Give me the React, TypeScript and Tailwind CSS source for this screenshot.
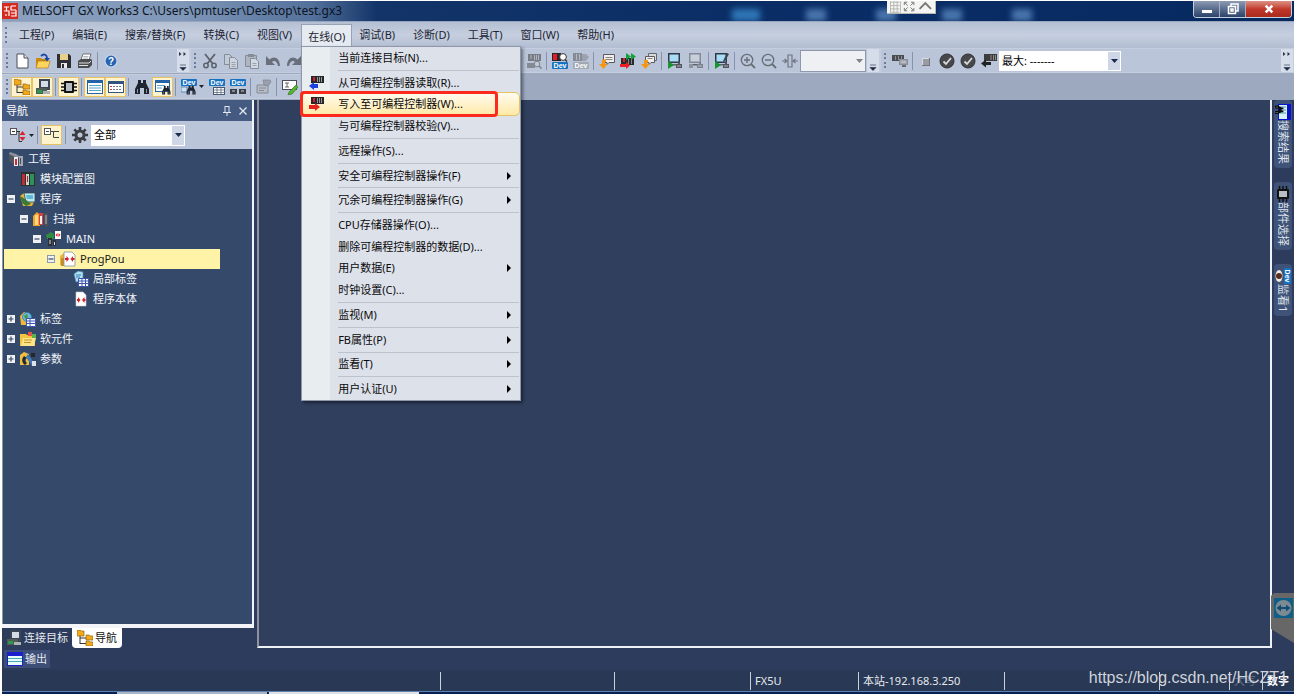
import React from 'react';
import type { ReactNode } from 'react';

const FONT = "font-['Noto_Sans','Noto_Sans_CJK_SC',sans-serif]";

function Svg({ children, size = 'size-4' }: { children: ReactNode; size?: string }) {
  return (
    <svg viewBox="0 0 16 16" className={`${size} shrink-0`} aria-hidden="true">
      {children}
    </svg>
  );
}

/* ---------- small drawing parts ---------- */

function Rack({ off = false, y = 0 }: { off?: boolean; y?: number }) {
  return (
    <g transform={`translate(0 ${y})`}>
      <rect x="2" y="1" width="13" height="7" fill={off ? '#777c85' : '#26262a'} />
      <rect x="4" y="2" width="2" height="4" fill={off ? '#9297a0' : '#d6202c'} />
      <path d="M8.5 2v5M10.5 2v5M12.5 2v5" stroke={off ? '#aeb4bf' : '#9a9a96'} />
    </g>
  );
}

function DevTag({ y = 0, off = false }: { y?: number; off?: boolean }) {
  return (
    <g transform={`translate(0 ${y})`}>
      <rect x="0" y="0" width="16" height="7" rx="1" fill={off ? '#a2a8b3' : '#1673c4'} />
      <text x="8" y="6" fontSize="7" fontWeight="700" fill="#fff" textAnchor="middle" fontFamily="Liberation Sans">
        Dev
      </text>
    </g>
  );
}

function Binoc({ t = '', c = '#1d2430' }: { t?: string; c?: string }) {
  return (
    <g transform={t} fill={c}>
      <path d="M4 1h3v3h2V1h3v3l3 6v5h-5V9H6v6H1v-5l3-6z" />
      <path d="M3.500 10v4M12.500 10v4" stroke="#8d95a5" />
    </g>
  );
}

function MonitorShape({ off = false }: { off?: boolean }) {
  return (
    <g>
      <rect x="1" y="0" width="12" height="10" fill={off ? '#858b96' : '#2f3a48'} />
      <rect x="2.500" y="1.500" width="9" height="7" fill={off ? '#c9cfda' : '#a9dcf5'} />
      <path d="M4 11h5v1.500H4z" fill="#5d646f" />
      <path d="M9 11h2v-2h2v2h2v4h-6z" fill={off ? '#7c828c' : '#50545c'} />
      <path d="M11 12v2M13 12v2" stroke="#c9ccd2" strokeWidth=".8" />
    </g>
  );
}

/* ---------- toolbar icons ---------- */

const NewIcon = () => (
  <Svg>
    <path d="M3 1h7l4 4v10H3z" fill="#fff" stroke="#4b4f58" />
    <path d="M10 1v4h4" fill="#dfe3ea" stroke="#4b4f58" />
  </Svg>
);
const OpenIcon = () => (
  <Svg>
    <path d="M1 5h5l1 1h6v9H1z" fill="#c98a10" />
    <path d="M3 8h12l-2 7H1z" fill="#ffd45c" stroke="#a8710d" strokeWidth=".6" />
    <path d="M6 3c3-3 6-1 6 2" fill="none" stroke="#1747a5" strokeWidth="1.800" />
    <path d="M9.500 5h5.500l-3 3.500z" fill="#1747a5" />
  </Svg>
);
const SaveIcon = () => (
  <Svg>
    <path d="M1 1h12l2 2v12H1z" fill="#2e2f33" />
    <rect x="4" y="1" width="8" height="6" fill="#e7cf8c" />
    <rect x="5" y="10" width="6" height="5" fill="#e9e9ec" />
    <rect x="6" y="11" width="2" height="4" fill="#2e2f33" />
  </Svg>
);
const PrintIcon = () => (
  <Svg>
    <path d="M6 1h8l-2 6H4z" fill="#fff" stroke="#555" strokeWidth=".8" />
    <path d="M6.500 3.500h5M6 5h5" stroke="#888" strokeWidth=".6" />
    <path d="M1 8l3-2h10l1 1v5l-3 3H1z" fill="#4c4d51" />
    <path d="M2 10h10l2-2M2 12.500h9" stroke="#dedede" fill="none" />
  </Svg>
);
const HelpIcon = () => (
  <Svg>
    <circle cx="8" cy="8" r="6" fill="#2763b3" stroke="#c4d5ec" strokeWidth="1.200" />
    <text x="8" y="11.500" fontSize="10" fontWeight="700" fill="#fff" textAnchor="middle" fontFamily="Liberation Sans">
      ?
    </text>
  </Svg>
);
const CutIcon = () => (
  <Svg>
    <path d="M3 1l8 10M13 1L5 11" stroke="#5b616b" strokeWidth="1.800" fill="none" />
    <circle cx="4" cy="12.500" r="2.200" fill="none" stroke="#5b616b" strokeWidth="1.500" />
    <circle cx="12" cy="12.500" r="2.200" fill="none" stroke="#5b616b" strokeWidth="1.500" />
  </Svg>
);
const CopyIcon = () => (
  <Svg>
    <path d="M1.500 1.500h5l3 3v7h-8z" fill="#c3cad7" stroke="#878d98" />
    <path d="M6.500 4.500h5l3 3v8h-8z" fill="#cdd4e0" stroke="#878d98" />
    <path d="M8.500 9.500h4M8.500 11.500h4M8.500 13.500h4" stroke="#9ba1ab" />
  </Svg>
);
const PasteIcon = () => (
  <Svg>
    <path d="M1.500 2.500h11v11h-11z" fill="#aeb5c1" stroke="#878d98" />
    <path d="M4 1h6v3H4z" fill="#878d98" />
    <path d="M6.500 5.500h5l3 3v7h-8z" fill="#d2d8e3" stroke="#878d98" />
    <path d="M8.500 10.500h4M8.500 12.500h4" stroke="#9ba1ab" />
  </Svg>
);
const UndoIcon = () => (
  <Svg>
    <path d="M1 3v9h9L7 9c2-2 5-1 6 4h2C15 5 9 2 4.500 6.500z" fill="#6a707b" />
  </Svg>
);
const RedoIcon = () => (
  <Svg>
    <path d="M15 3v9H6l3-3C7 7 4 8 3 13H1C1 5 7 2 11.500 6.500z" fill="#6a707b" />
  </Svg>
);
const RackSearchOff = () => (
  <Svg>
    <Rack off />
    <path d="M1 10h8v5H1z" fill="#858b95" />
    <circle cx="11" cy="11" r="2.800" fill="#c5ccd8" stroke="#7b818b" />
    <path d="M13 13l2.500 2.500" stroke="#7b818b" strokeWidth="1.500" />
  </Svg>
);
const RackDev = () => (
  <Svg>
    <rect x="0" y="0" width="9" height="8" fill="#26262a" />
    <rect x="1" y="1" width="4" height="6" fill="#e01d2c" />
    <circle cx="11" cy="4" r="3.400" fill="#fff" stroke="#333" />
    <path d="M13 6.500l2 2" stroke="#333" strokeWidth="1.500" />
    <DevTag y={9} />
  </Svg>
);
const RackDevOff = () => (
  <Svg>
    <rect x="0" y="0" width="9" height="8" fill="#858b95" />
    <path d="M3.500 1v6M6.500 1v6" stroke="#b5bbc5" />
    <path d="M9 1h4l3 3-3 4H9z" fill="#9ca2ad" />
    <DevTag y={9} off />
  </Svg>
);
const NoteOut = () => (
  <Svg>
    <path d="M4.500 1.500h11v8H10l-2 2v-2H4.500z" fill="#f1eeee" stroke="#5b5b5f" />
    <path d="M6.500 4.500h7M6.500 6.500h7" stroke="#8d8080" />
    <path d="M7 6.500H3V11H0l4.500 5 4-5H6V9h1z" fill="#f7960f" />
  </Svg>
);
const NoteOut2 = () => (
  <Svg>
    <path d="M7.500.5h8v7h-8z" fill="#d9d9dd" stroke="#66676d" />
    <path d="M4.500 3.500h9v6H10l-2 2v-2H4.500z" fill="#f1eeee" stroke="#5b5b5f" />
    <path d="M6.500 5.500h5" stroke="#8d8080" />
    <path d="M7 7H3v4H0l4.500 5 4-5H6V9.500h1z" fill="#f7960f" />
  </Svg>
);
const RackGo = () => (
  <Svg>
    <path d="M1 5h13v7H1z" fill="#2a2a2d" />
    <path d="M3 5h2v4H3z" fill="#e01d2c" />
    <path d="M8.500 6v5M11.500 6v5" stroke="#8b8b8b" />
    <path d="M6 0l5 3.500L6 7zM11 0l5 3.500L11 7z" fill="#15a23a" />
    <path d="M0 11h6V9l4 3.500L6 16v-2H0z" fill="#ec1f24" />
  </Svg>
);
const MonitorRun = () => (
  <Svg>
    <MonitorShape />
    <path d="M1 8l6 4-6 4z" fill="#17942c" />
  </Svg>
);
const MonitorOff = () => (
  <Svg>
    <MonitorShape off />
    <rect x="1" y="11" width="4" height="4" fill="#8d939d" />
  </Svg>
);
const MonitorEdit = () => (
  <Svg>
    <MonitorShape />
    <path d="M1 8l6 4-6 4z" fill="#17942c" />
    <path d="M15 1l-4 7-2 1 .5-2L13 0z" fill="#3b4452" />
  </Svg>
);
const ZoomPlus = ({ minus = false }: { minus?: boolean }) => (
  <Svg>
    <circle cx="7" cy="7" r="5.700" fill="none" stroke="#676d77" strokeWidth="1.300" />
    <path d="M11 11l4 4" stroke="#676d77" strokeWidth="1.800" />
    <path d={minus ? 'M4 7h6' : 'M4 7h6M7 4v6'} stroke="#676d77" strokeWidth="1.400" />
  </Svg>
);
const FitIcon = () => (
  <Svg>
    <path d="M6 2h4v12H6z" fill="none" stroke="#6f7580" strokeWidth="1.200" />
    <path d="M0 8h5M11 8h5M2.500 6L5 8l-2.500 2M13.500 6L11 8l2.500 2" fill="none" stroke="#6f7580" strokeWidth="1.200" />
  </Svg>
);
const RackMonitorIcon = () => (
  <Svg>
    <path d="M0 2h12v6H0z" fill="#4a4c52" />
    <path d="M3.500 3v4M6.500 3v4M9.500 3v4" stroke="#8c8f96" />
    <path d="M7 6h9v6H7z" fill="#8a8e96" />
    <path d="M8.500 7.500h6v3h-6z" fill="#b6bac2" />
    <path d="M10 12h4v2h-4z" fill="#656972" />
  </Svg>
);
const StopIcon = () => (
  <Svg>
    <rect x="4" y="5" width="8" height="8" fill="#73767d" />
    <rect x="4" y="5" width="7" height="7" fill="#d8dae0" />
    <rect x="5" y="6" width="6" height="6" fill="#999ca4" />
  </Svg>
);
const CheckIcon = () => (
  <Svg>
    <circle cx="8" cy="8" r="7" fill="#47484b" stroke="#303134" />
    <path d="M4.500 8.500l2.500 2.500 5-6" fill="none" stroke="#d9dadd" strokeWidth="1.800" />
  </Svg>
);
const RackBack = () => (
  <Svg>
    <path d="M3 1h13v7H3z" fill="#3b3c3f" />
    <path d="M10 2v5M12.500 2v5M14.500 2v5" stroke="#8d8d84" />
    <path d="M10 9H5V6.500L0 10.500l5 4V12h5z" fill="#222325" />
  </Svg>
);

const TreeIcon = () => (
  <Svg>
    <path d="M3 5v9M3 8h6M3 13.500h6" stroke="#333" fill="none" />
    <path d="M0 0h3l1 1h3v5H0zM9 5h3l1 1h3v4H9zM9 11h3l1 1h3v4H9z" fill="#f2a91c" stroke="#94630b" strokeWidth=".7" />
  </Svg>
);
const ConnectIcon = () => (
  <Svg>
    <path d="M4 0h11v11H4z" fill="#3d4654" />
    <path d="M6 2h7v6H6z" fill="#d4dce5" />
    <path d="M1 9h11v6H1z" fill="#4f5d57" />
    <path d="M2 11h5v3H2z" fill="#2d9650" />
    <path d="M8 12h7v3H8z" fill="#aab4b4" />
  </Svg>
);
const ChipIcon = ({ size }: { size?: string }) => (
  <Svg size={size}>
    <path d="M0 4.500h16M0 8h16M0 11.500h16" stroke="#111" strokeWidth="1.500" />
    <rect x="3" y="2" width="10" height="12" rx="1" fill="#111" />
    <rect x="5" y="4" width="6" height="8" fill="#b9bdc4" />
  </Svg>
);
const WindowIcon = () => (
  <Svg>
    <rect x="0" y="1" width="16" height="14" fill="#2463a8" />
    <rect x="1" y="4" width="14" height="10" fill="#fff" />
    <path d="M2 6.500h12M2 9h12M2 11.500h12" stroke="#57a9cb" />
  </Svg>
);
const WindowListIcon = () => (
  <Svg>
    <rect x="0" y="2" width="16" height="12" fill="#31557f" />
    <rect x="1" y="5" width="14" height="8" fill="#fff" />
    <path d="M2 7.500h2M2 10.500h2" stroke="#c23737" />
    <path d="M5 7.500h9M5 10.500h9" stroke="#76818e" strokeDasharray="2 1" />
  </Svg>
);
const WindowFind = () => (
  <Svg>
    <rect x="0" y="1" width="15" height="12" fill="#2463a8" />
    <rect x="1" y="4" width="13" height="8" fill="#fff" />
    <path d="M2 6.500h8M2 9h5" stroke="#57a9cb" />
    <Binoc t="translate(6.500 6.500) scale(.6)" />
  </Svg>
);
const BinocIcon = () => (
  <Svg>
    <Binoc />
  </Svg>
);
const DevFind = () => (
  <Svg>
    <DevTag />
    <path d="M0 8h6v5H0z" fill="#cfe0ef" stroke="#2d6ba6" strokeWidth=".7" />
    <Binoc t="translate(5 6) scale(.64)" />
  </Svg>
);
const DevTable = () => (
  <Svg>
    <DevTag />
    <rect x="4.500" y="8.500" width="11" height="7" fill="#fff" stroke="#4a5972" />
    <path d="M4 11h12M4 13.500h12M8 8v8M12 8v8" stroke="#4a5972" strokeWidth=".7" />
  </Svg>
);
const DevNet = () => (
  <Svg>
    <DevTag />
    <path d="M0 10h7v5H0zM9 10h7v5H9z" fill="#3a3f47" />
    <path d="M2 12h3M11 12h3M4 8.500h8" stroke="#cbd1da" />
  </Svg>
);
const PropsOff = () => (
  <Svg>
    <path d="M1 6h11v8H1z" fill="#b6bcc7" stroke="#858b96" />
    <path d="M3 9h7M3 11.500h5" stroke="#858b96" />
    <path d="M7 1h7l1 2-3 4-4-1z" fill="#9aa0ab" stroke="#7e848f" strokeWidth=".7" />
  </Svg>
);
const EditIcon = () => (
  <Svg>
    <rect x=".5" y="1.500" width="14" height="9" fill="#fff" stroke="#4b5058" />
    <path d="M3 4h4M5 4v4M3 8h4" stroke="#444" strokeWidth=".8" />
    <path d="M14 6l2 2-6 7-4 1 1-3z" fill="#55b52f" stroke="#2b6c18" strokeWidth=".6" />
  </Svg>
);
const ReadIcon = () => (
  <Svg>
    <Rack />
    <path d="M9 9H5V7l-5 4 5 4v-2h4z" fill="#1c3fe0" />
  </Svg>
);
const WriteIcon = () => (
  <Svg>
    <Rack />
    <path d="M0 9h6V7l5 4-5 4v-2H0z" fill="#e3231c" />
  </Svg>
);

/* ---------- navigation icons ---------- */

const CollapseIcon = () => (
  <Svg>
    <rect x=".5" y="1.500" width="6" height="6" fill="#fff" stroke="#555" />
    <path d="M2 4.500h3M7 4.500h3M9 4.500v10M9 14.500h3" stroke="#333" fill="none" />
    <path d="M12.500 4l3 4h-6zM12.500 14l3-4h-6z" fill="#d8242a" />
  </Svg>
);
const ExpandIcon = () => (
  <Svg>
    <rect x=".5" y="1.500" width="6" height="6" fill="#fff" stroke="#555" />
    <path d="M2 4.500h3M7 4.500h2.500v6H15M9.500 4.500H15" stroke="#444" fill="none" />
  </Svg>
);
const GearIcon = () => (
  <Svg>
    <circle cx="8" cy="8" r="4" fill="none" stroke="#3b3d42" strokeWidth="3" />
    <path d="M8 0v3M8 13v3M0 8h3M13 8h3M2.300 2.300l2.200 2.200M11.500 11.500l2.200 2.200M13.700 2.300l-2.200 2.200M4.500 11.500l-2.200 2.200" stroke="#3b3d42" strokeWidth="2.600" />
  </Svg>
);
const ProjectIcon = () => (
  <Svg>
    <path d="M1 2l6 3v9l-6-4z" fill="#50545c" />
    <path d="M2 1l6 2 5 3-4 1-8-4z" fill="#8b9099" />
    <path d="M6 6h4v9H6z" fill="#e9eef3" />
    <path d="M7 8h2v6H7z" fill="#d52b33" />
    <path d="M11 5h4v10h-4z" fill="#a3a9b1" />
    <path d="M12.500 7v6" stroke="#454a52" />
  </Svg>
);
const ModuleIcon = () => (
  <Svg>
    <path d="M1 1h14v14H1z" fill="#26332f" />
    <path d="M2 3h3v11H2z" fill="#c32b35" />
    <path d="M6 3h3v11H6z" fill="#c9d4cf" />
    <path d="M7.500 5v6" stroke="#b7222c" />
    <path d="M10 3h4v11h-4z" fill="#2f9157" />
  </Svg>
);
const ProgramIcon = () => (
  <Svg>
    <path d="M0 5l4-3h11v7l-3 6H3z" fill="#e0b43a" />
    <path d="M4 2h11v9H6z" fill="#bfe8f2" stroke="#2e4d5a" strokeWidth=".8" />
    <path d="M6 4h7v4H7z" fill="#5fb9d4" />
    <path d="M0 5l5 3 6 5-5 2-4-3z" fill="#3d7a36" />
  </Svg>
);
const ScanIcon = () => (
  <Svg>
    <path d="M0 5l4-4 3 3v11H0z" fill="#f0a72e" />
    <path d="M2 4h3v10H2z" fill="#ffd77a" />
    <path d="M6 2h4v12H6z" fill="#d64040" />
    <path d="M7 5h2v8H7z" fill="#f5f0ee" />
    <path d="M11 2h4v13h-4z" fill="#4c4f56" />
    <path d="M13 4v9" stroke="#b4b8c0" />
  </Svg>
);
const MainIcon = () => (
  <Svg>
    <path d="M0 4l5-3 3 2v5H1z" fill="#2f8a45" />
    <path d="M2 7h4v8H2zM7 9h3v6H7z" fill="#2b2f36" />
    <path d="M4 9v4M8.500 11v3" stroke="#d7dbe0" />
    <path d="M9 0h6v8H9z" fill="#fff" />
    <path d="M9.500 4l2-2v4zM14.500 4l-2-2v4z" fill="#d4222a" />
  </Svg>
);
const PouIcon = () => (
  <Svg>
    <path d="M0 5l4-3v12H0z" fill="#eeb53c" />
    <path d="M1 7h3v8H1z" fill="#c98f1e" />
    <path d="M4 1h8l3 3v11H4z" fill="#fff" stroke="#8392aa" strokeWidth=".8" />
    <path d="M5 7h1.500V5L9 8l-2.500 3V9H5zM14.500 7H13V5l-2.500 3 2.500 3V9h1.500z" fill="#d4222a" />
  </Svg>
);
const LocalLabelIcon = () => (
  <Svg>
    <path d="M1 3l4-3 5 1v9l-7 1z" fill="#aee0f4" stroke="#4a8cb6" strokeWidth=".7" />
    <path d="M3 4h5M3 6h4" stroke="#3d7fb0" />
    <path d="M5.500 7.500h10v8h-10z" fill="#fff" stroke="#3a54b4" />
    <path d="M5 10h11M5 12.500h11M9 7v9M12.500 7v9" stroke="#3a54b4" />
  </Svg>
);
const BodyIcon = () => (
  <Svg>
    <path d="M3 1h7l3 3v11H3z" fill="#fff" stroke="#c3cad6" strokeWidth=".6" />
    <path d="M4 8h1V6l2.500 3L5 12v-2H4zM12.500 8h-1V6L9 9l2.500 3v-2h1z" fill="#d4222a" />
  </Svg>
);
const LabelIcon = () => (
  <Svg>
    <path d="M0 5l4-4 7 3v10H1z" fill="#efb73d" />
    <circle cx="7" cy="6" r="4.500" fill="#68b7dd" stroke="#2e7ba5" strokeWidth=".7" />
    <path d="M4 5l3-2 1 3-2 3z" fill="#3f9e4d" />
    <path d="M6.500 7.500h9v8h-9z" fill="#fff" stroke="#3a54b4" />
    <path d="M6 10h10M6 12.500h10M10 7v9" stroke="#3a54b4" />
  </Svg>
);
const DeviceIcon = () => (
  <Svg>
    <path d="M0 3h6l1 1h8v11H0z" fill="#f3c53f" />
    <path d="M3 7h13l-2 8H1z" fill="#ffe58a" />
    <path d="M8 1h4v4H8z" fill="#e2574c" />
    <path d="M12 3h4v4h-4z" fill="#59b34f" />
    <path d="M4 9h8M4 11.500h7" stroke="#c39424" />
  </Svg>
);
const ParamIcon = () => (
  <Svg>
    <path d="M0 4l4-3 5 2v11H0z" fill="#f0bd40" />
    <path d="M4 5c-3 3-2 7 1 9l2-2c-2-1-2-4 0-5z" fill="#1f2a38" />
    <path d="M8 3l7 10-3 2-6-9z" fill="#3f78b6" />
    <path d="M11 2h4v4h-4z" fill="#22262e" />
    <path d="M12 10h4v5h-4z" fill="#dbe2ea" />
  </Svg>
);
const OutputIcon = () => (
  <Svg>
    <rect x="0" y="1" width="16" height="14" fill="#1a1fd0" />
    <rect x="1" y="5" width="14" height="9" fill="#e8fbff" />
    <path d="M1 7.500h14M1 10.500h14" stroke="#45aeb4" />
  </Svg>
);
const SearchResultIcon = () => (
  <Svg>
    <rect x="0" y="0" width="16" height="13" fill="#0a12cf" />
    <rect x="1" y="4" width="14" height="8" fill="#d3f3f5" />
    <path d="M3 5v6M6 5v6M9 5v6" stroke="#58a0a8" />
    <Binoc t="translate(1 7) scale(.6)" c="#090b10" />
  </Svg>
);
const WatchIcon = () => (
  <Svg>
    <DevTag />
    <ellipse cx="8" cy="12" rx="6" ry="3.500" fill="#f4e9de" />
    <circle cx="8" cy="12" r="3" fill="#572f1c" />
  </Svg>
);

/* ---------- controls ---------- */

function Tool({ label, icon, active = false }: { label: string; icon: ReactNode; active?: boolean }) {
  return (
    <button
      type="button"
      aria-label={label}
      className={`flex h-5 w-[21px] shrink-0 items-center justify-center border ${
        active ? 'border-[#e5c365] bg-[#fff3cd]' : 'border-transparent'
      }`}
    >
      {icon}
    </button>
  );
}

const Sep = () => <span className="mx-[2px] h-[18px] w-px shrink-0 bg-[#8693ad]" />;
const Grip = () => (
  <span className="flex h-4 w-2 shrink-0 flex-col items-center justify-between">
    <i className="size-[2px] bg-[#6c7a95]" />
    <i className="size-[2px] bg-[#6c7a95]" />
    <i className="size-[2px] bg-[#6c7a95]" />
    <i className="size-[2px] bg-[#6c7a95]" />
  </span>
);

function Overflow({ more = false }: { more?: boolean }) {
  return (
    <button type="button" aria-label="工具栏选项" className="ml-auto flex h-full w-3 shrink-0 items-center justify-center bg-[#d5dcea]">
      <svg viewBox="0 0 10 22" className="h-[22px] w-[10px]" aria-hidden="true">
        {more && <path d="M1 2l2.500 2L1 6zM5.500 2L8 4 5.500 6z" fill="#2b3344" />}
        <path d="M2 15h6M2 17.500h6L5 20.500z" fill="#1f2a44" stroke="#1f2a44" strokeWidth=".6" />
      </svg>
    </button>
  );
}

function Dropdown({ label, value, box, off = false }: { label: string; value: string; box: string; off?: boolean }) {
  return (
    <span className={`relative flex shrink-0 ${box}`}>
      <select
        aria-label={label}
        className={`h-full w-full appearance-none border px-[2px] text-[11px] leading-4 text-black ${
          off ? 'border-[#8f99ab] bg-[#eef0f4]' : 'border-white bg-white'
        }`}
      >
        <option>{value}</option>
      </select>
      <span
        className={`pointer-events-none absolute inset-y-px right-px flex w-3 items-center justify-center ${
          off ? 'bg-[#eef0f4]' : 'bg-[#cfd7e6]'
        }`}
      >
        <svg viewBox="0 0 7 4" className="h-1 w-[7px]" aria-hidden="true">
          <path d="M0 0h7L3.500 4z" fill={off ? '#7c8089' : '#1b2a4d'} />
        </svg>
      </span>
    </span>
  );
}

/* ---------- data ---------- */

type MenuEntry = { text: string; sub?: boolean; line?: boolean; icon?: ReactNode; hot?: boolean };
const onlineMenu: MenuEntry[] = [
  { text: '当前连接目标(N)...', line: true },
  { text: '从可编程控制器读取(R)...', icon: <ReadIcon /> },
  { text: '写入至可编程控制器(W)...', icon: <WriteIcon />, hot: true },
  { text: '与可编程控制器校验(V)...', line: true },
  { text: '远程操作(S)...', line: true },
  { text: '安全可编程控制器操作(F)', sub: true, line: true },
  { text: '冗余可编程控制器操作(G)', sub: true, line: true },
  { text: 'CPU存储器操作(O)...' },
  { text: '删除可编程控制器的数据(D)...' },
  { text: '用户数据(E)', sub: true },
  { text: '时钟设置(C)...', line: true },
  { text: '监视(M)', sub: true, line: true },
  { text: 'FB属性(P)', sub: true, line: true },
  { text: '监看(T)', sub: true, line: true },
  { text: '用户认证(U)', sub: true },
];

const menusBefore = ['工程(P)', '编辑(E)', '搜索/替换(F)', '转换(C)', '视图(V)'];
const menusAfter = ['调试(B)', '诊断(D)', '工具(T)', '窗口(W)', '帮助(H)'];

type Node = { text: string; icon: ReactNode; pad: string; box?: '+' | '-'; selected?: boolean };
const nodes: Node[] = [
  { text: '工程', icon: <ProjectIcon />, pad: 'pl-[5px]' },
  { text: '模块配置图', icon: <ModuleIcon />, pad: 'pl-[17px]' },
  { text: '程序', icon: <ProgramIcon />, pad: 'pl-[4px]', box: '-' },
  { text: '扫描', icon: <ScanIcon />, pad: 'pl-[17px]', box: '-' },
  { text: 'MAIN', icon: <MainIcon />, pad: 'pl-[30px]', box: '-' },
  { text: 'ProgPou', icon: <PouIcon />, pad: 'pl-[43px]', box: '-', selected: true },
  { text: '局部标签', icon: <LocalLabelIcon />, pad: 'pl-[70px]' },
  { text: '程序本体', icon: <BodyIcon />, pad: 'pl-[70px]' },
  { text: '标签', icon: <LabelIcon />, pad: 'pl-[4px]', box: '+' },
  { text: '软元件', icon: <DeviceIcon />, pad: 'pl-[4px]', box: '+' },
  { text: '参数', icon: <ParamIcon />, pad: 'pl-[4px]', box: '+' },
];

/* ---------- page parts ---------- */

function TitleBar() {
  return (
    <header className="relative flex h-[21px] shrink-0 items-center overflow-hidden border-b border-[#98a6bd] bg-[linear-gradient(90deg,#8ca0be_0%,#7f97b8_14%,#54719b_24%,#123468_29%,#0a2d66_60%,#062a60_100%)]">
      <div className="absolute left-[730px] flex gap-[46px] pt-2 blur-[3px]">
        <i className="h-3 w-7 bg-[#2f78b8]" />
        <i className="h-3 w-5 bg-[#4a76ad]" />
        <i className="ml-1 h-3 w-5 bg-[#4a76ad]" />
        <i className="h-3 w-5 bg-[#4a76ad]" />
        <i className="ml-1 h-3 w-5 bg-[#4a76ad]" />
      </div>
      <svg viewBox="0 0 16 16" className="relative size-4 shrink-0" aria-hidden="true">
        <rect width="16" height="16" fill="#d52a1f" />
        <path d="M2 4h5M4.500 4v4M2 8h5v5M4 11v2M9 3h5M9 3v4h5M9 10h5v3H9M14 7v6" fill="none" stroke="#fff" strokeWidth="1.200" />
      </svg>
      <h1 className="relative ml-1 text-[12px] leading-5 text-[#0c1422]">MELSOFT GX Works3 C:\Users\pmtuser\Desktop\test.gx3</h1>
      <div className="absolute right-[358px] top-0 flex h-[13px] items-center gap-1 border-b border-r border-[#b7b7b7] bg-[#f4f4f2] px-[3px]">
        <svg viewBox="0 0 44 12" className="h-3 w-[42px]" aria-hidden="true">
          <path d="M0 1h10M0 4.500h10M0 8h10M0 11.500h10M.5 0v12M4 0v12M7.500 0v12M11 0v12" stroke="#b1b1ad" strokeWidth=".9" />
          <path d="M15 4V1h3M22 1h3v3M25 7v3h-3M18 10h-3V7M15.500 1.500l3 3M24.500 1.500l-3 3M24.500 9.500l-3-3M15.500 9.500l3-3" fill="none" stroke="#777" />
          <path d="M31 8l6-6 6 6" fill="none" stroke="#777" strokeWidth="2" />
        </svg>
      </div>
      <div className="absolute right-[2px] top-0 flex h-[17px] overflow-hidden rounded-b border border-t-0 border-[#c7d0df]">
        <button type="button" aria-label="最小化" className="flex w-[26px] items-center justify-center border-r border-[#a3aec1] bg-linear-to-b from-[#8e9bb3] to-[#2b4269]">
          <span className="mt-1 h-[3px] w-[10px] bg-white" />
        </button>
        <button type="button" aria-label="还原" className="flex w-[26px] items-center justify-center border-r border-[#a3aec1] bg-linear-to-b from-[#8e9bb3] to-[#2b4269]">
          <svg viewBox="0 0 12 12" className="size-3" aria-hidden="true">
            <path d="M4 3V1h7v7H9M1.500 3.500h7v7h-7zM4 6h2v2H4z" fill="none" stroke="#fff" strokeWidth="1.500" />
          </svg>
        </button>
        <button type="button" aria-label="关闭" className="flex w-[45px] items-center justify-center bg-linear-to-b from-[#dc8f85] via-[#c1392b] to-[#a92a1c]">
          <svg viewBox="0 0 12 12" className="size-[10px]" aria-hidden="true">
            <path d="M2 2l8 8M10 2l-8 8" stroke="#fff" strokeWidth="3" />
          </svg>
        </button>
      </div>
    </header>
  );
}

function OnlineMenu() {
  return (
    <div role="menu" className="absolute left-0 top-full z-20 -mt-[2px] flex h-[355px] w-[220px] flex-col border border-[#8e98aa] bg-linear-to-r from-[#e8edf0] from-13% to-[#dde1ea] to-13% shadow-[2px_2px_3px_rgba(0,0,0,0.45)]">
      {onlineMenu.map((m) => (
        <React.Fragment key={m.text}>
          <button
            type="button"
            role="menuitem"
            className={`relative mx-px flex min-h-0 flex-1 items-center text-left text-[11px] leading-4 text-[#0a0a0a] ${
              m.hot ? 'rounded-sm bg-linear-to-b from-[#fffbef] to-[#ffe9a6] outline outline-[#e5c365]' : ''
            }`}
          >
            <span className="flex w-[35px] justify-center pr-2">{m.icon}</span>
            <span className="flex-1 whitespace-nowrap">{m.text}</span>
            {m.sub && (
              <svg viewBox="0 0 4 8" className="mr-2 h-2 w-1" aria-hidden="true">
                <path d="M0 0l4 4-4 4z" fill="#000" />
              </svg>
            )}
            {m.hot && <span className="absolute -inset-y-[2px] -left-[3px] right-[21px] rounded-sm border-[3px] border-[#fb2a1d]" />}
          </button>
          {m.line && <hr className="my-px ml-9 mr-px h-px shrink-0 border-0 bg-[#bcc2ce]" />}
        </React.Fragment>
      ))}
    </div>
  );
}

function MenuBar() {
  return (
    <nav aria-label="主菜单" className="flex h-[26px] shrink-0 items-stretch bg-linear-to-b from-[#b4bfd3] via-[#c6cfdf] to-[#b2bdd2] text-[11px] leading-4 text-[#1c2434]">
      <span className="flex w-2 items-center">
        <Grip />
      </span>
      {menusBefore.map((m) => (
        <button key={m} type="button" className="px-[9px]">
          {m}
        </button>
      ))}
      <div className="relative flex">
        <button type="button" aria-haspopup="menu" aria-expanded="true" className="mt-[2px] border border-b-0 border-[#97a2b6] bg-[#e6ebf1] px-[6px]">
          在线(O)
        </button>
        <OnlineMenu />
      </div>
      <div className="ml-[-2px] flex">
        {menusAfter.map((m) => (
          <button key={m} type="button" className="px-[9px]">
            {m}
          </button>
        ))}
      </div>
    </nav>
  );
}

const bar = 'flex h-[25px] items-center border border-[#c5cede] bg-[#bac5da]';

function ToolbarRows() {
  return (
    <div className="flex shrink-0 flex-col bg-[#9ca9bf]">
      <div className="flex h-[26px]">
        <div className={`${bar} w-[188px] shrink-0`}>
          <Grip />
          <Tool label="新建" icon={<NewIcon />} />
          <Tool label="打开" icon={<OpenIcon />} />
          <Tool label="保存" icon={<SaveIcon />} />
          <Tool label="打印" icon={<PrintIcon />} />
          <Sep />
          <Tool label="帮助" icon={<HelpIcon />} />
          <Overflow more />
        </div>
        <div className={`${bar} w-[690px] shrink-0`}>
          <Grip />
          <Tool label="剪切" icon={<CutIcon />} />
          <Tool label="复制" icon={<CopyIcon />} />
          <Tool label="粘贴" icon={<PasteIcon />} />
          <Tool label="撤消" icon={<UndoIcon />} />
          <Tool label="恢复" icon={<RedoIcon />} />
          <span className="flex-1" />
          <Tool label="模块搜索" icon={<RackSearchOff />} />
          <Sep />
          <Tool label="软元件监视" icon={<RackDev />} />
          <Tool label="软元件编辑" icon={<RackDevOff />} />
          <Sep />
          <Tool label="注释读取" icon={<NoteOut />} />
          <Tool label="写入" icon={<RackGo />} />
          <Tool label="注释写入" icon={<NoteOut2 />} />
          <Sep />
          <Tool label="监视开始" icon={<MonitorRun />} />
          <Tool label="监视停止" icon={<MonitorOff />} />
          <Sep />
          <Tool label="监视写入" icon={<MonitorEdit />} />
          <Sep />
          <Tool label="放大" icon={<ZoomPlus />} />
          <Tool label="缩小" icon={<ZoomPlus minus />} />
          <Tool label="适合宽度" icon={<FitIcon />} />
          <Dropdown label="缩放比例" value="" box="h-[22px] w-[66px]" off />
          <span className="w-px" />
          <span className="flex h-full">
            <Overflow />
          </span>
        </div>
        <div className={`${bar} flex-1`}>
          <Grip />
          <Tool label="模块监视" icon={<RackMonitorIcon />} />
          <Sep />
          <Tool label="停止" icon={<StopIcon />} />
          <Tool label="确认" icon={<CheckIcon />} />
          <Tool label="全部确认" icon={<CheckIcon />} />
          <Tool label="返回" icon={<RackBack />} />
          <Dropdown label="最大" value="最大: -------" box="h-5 w-[122px]" />
          <Overflow more />
        </div>
      </div>
      <div className="flex h-[26px]">
        <div className={`${bar} w-[440px] shrink-0`}>
          <Grip />
          <Tool label="导航" icon={<TreeIcon />} active />
          <Tool label="连接目标" icon={<ConnectIcon />} active />
          <Sep />
          <Tool label="部件选择" icon={<ChipIcon />} active />
          <Sep />
          <Tool label="输出" icon={<WindowIcon />} active />
          <Tool label="进度" icon={<WindowListIcon />} active />
          <Sep />
          <Tool label="搜索" icon={<BinocIcon />} />
          <Tool label="搜索结果" icon={<WindowFind />} active />
          <Sep />
          <Tool label="软元件搜索" icon={<DevFind />} />
          <svg viewBox="0 0 5 3" className="mr-[2px] h-[3px] w-[5px] shrink-0" aria-hidden="true">
            <path d="M0 0h5L2.500 3z" fill="#1b2334" />
          </svg>
          <Tool label="软元件表" icon={<DevTable />} />
          <Tool label="软元件网络" icon={<DevNet />} />
          <Sep />
          <Tool label="属性" icon={<PropsOff />} />
          <Sep />
          <Tool label="编辑" icon={<EditIcon />} />
        </div>
      </div>
    </div>
  );
}

function Navigation() {
  return (
    <aside className="flex w-[252px] shrink-0 flex-col">
      <div className="flex min-h-0 flex-1 flex-col border-b-4 border-r-2 border-[#f2f4f7] bg-[#354a6b]">
        <div className="flex h-[21px] shrink-0 items-center justify-between bg-[#455a80] px-1 text-[11px] leading-4 text-white">
          <h2>导航</h2>
          <span className="flex gap-[6px]">
            <button type="button" aria-label="固定">
              <svg viewBox="0 0 10 10" className="size-[10px]" aria-hidden="true">
                <path d="M3 0v6M7 0v6M3 .5h4M1 6.500h8M5 6v4" stroke="#e5eaf2" fill="none" />
              </svg>
            </button>
            <button type="button" aria-label="关闭导航">
              <svg viewBox="0 0 10 10" className="size-[10px]" aria-hidden="true">
                <path d="M1.500 1.500l7 7M8.500 1.500l-7 7" stroke="#e5eaf2" strokeWidth="1.300" />
              </svg>
            </button>
          </span>
        </div>
        <div className="flex h-7 shrink-0 items-center gap-px bg-[#bac5da] px-[5px]">
          <Tool label="折叠" icon={<CollapseIcon />} />
          <svg viewBox="0 0 5 3" className="h-[3px] w-[5px] shrink-0" aria-hidden="true">
            <path d="M0 0h5L2.500 3z" fill="#1b2334" />
          </svg>
          <Sep />
          <Tool label="展开" icon={<ExpandIcon />} active />
          <Sep />
          <Tool label="设置" icon={<GearIcon />} />
          <Dropdown label="显示范围" value="全部" box="h-[21px] w-[94px]" />
        </div>
        <ul role="tree" aria-label="工程" className="flex min-h-0 flex-1 flex-col overflow-hidden border-l border-[#8c97aa]">
          {nodes.map((n) => (
            <li
              key={n.text}
              role="treeitem"
              aria-selected={!!n.selected}
              className={`flex h-5 shrink-0 items-center text-[11px] leading-4 ${n.pad} ${
                n.selected ? 'mx-px mr-8 bg-[#fff3a8] text-[#16181c]' : 'text-[#f2f4f8]'
              }`}
            >
              {n.box && (
                <svg viewBox="0 0 8 8" className="mr-[5px] size-2 shrink-0" aria-hidden="true">
                  <rect x=".5" y=".5" width="7" height="7" fill="#eef1f6" stroke={n.selected ? '#8c98ad' : '#eef1f6'} />
                  <path d={n.box === '+' ? 'M1.500 4h5M4 1.500v5' : 'M1.500 4h5'} stroke="#39485f" strokeWidth="1.200" />
                </svg>
              )}
              {n.icon}
              <span className="ml-1 whitespace-nowrap">{n.text}</span>
            </li>
          ))}
        </ul>
      </div>
      <div role="tablist" className="flex h-5 shrink-0 text-[11px] leading-4">
        <button type="button" role="tab" aria-selected="false" className="flex items-center gap-[2px] px-1 text-[#e5e9f0]">
          <ConnectIcon />
          连接目标
        </button>
        <button type="button" role="tab" aria-selected="true" className="flex items-center gap-[2px] rounded-b-sm bg-white px-[5px] text-[#111]">
          <TreeIcon />
          导航
        </button>
      </div>
    </aside>
  );
}

function SideTab({ icon, text }: { icon: ReactNode; text: string }) {
  return (
    <button type="button" className="flex w-full flex-col items-center rounded-sm bg-[#3f5277] py-1 text-[11px] leading-4 text-[#dfe4ed]">
      <span className="rotate-90">{icon}</span>
      <span className="[writing-mode:vertical-rl] [text-orientation:sideways]">{text}</span>
    </button>
  );
}

function StatusBar() {
  const cell = 'h-[18px] shrink-0 border-l border-[#c9d0dc] pl-1 leading-[18px]';
  return (
    <footer className="relative flex h-[21px] shrink-0 items-center bg-[#293854] text-[11px] text-[#e6e9ef]">
      <span className="flex-1" />
      <span className={`${cell} w-[174px]`} />
      <span className={`${cell} w-[136px]`} />
      <span className={`${cell} w-[108px]`}>FX5U</span>
      <span className={`${cell} w-[146px]`}>本站-192.168.3.250</span>
      <span className={`${cell} w-[155px]`} />
      <span className={`${cell} w-[70px]`} />
      <span className={`${cell} w-[33px] text-[#66728a]`}>大写</span>
      <span className={`${cell} w-[32px] font-bold text-white`}>数字</span>
      <a
        href="https://blog.csdn.net/HCZT1"
        className="absolute bottom-[3px] right-[6px] font-['Liberation_Sans',sans-serif] text-[16px] leading-5 text-[#cfd4dc]"
      >
        https://blog.csdn.net/HCZT1
      </a>
    </footer>
  );
}

export default function App() {
  return (
    <div className={`flex h-screen flex-col overflow-hidden bg-white pb-[3px] pl-[2px] pr-[2px] pt-px ${FONT}`}>
      <TitleBar />
      <MenuBar />
      <ToolbarRows />
      <div className="relative flex min-h-0 flex-1 bg-[#2d3c5c]">
        <Navigation />
        <main className="ml-[3px] flex-1 border-b-2 border-l-2 border-r-2 border-b-[#eef1f5] border-l-[#8d929c] border-r-[#eef1f5] bg-[#303f5e]" />
        <aside className="flex w-[22px] shrink-0 flex-col gap-[14px] px-[2px]">
          <SideTab icon={<SearchResultIcon />} text="搜索结果" />
          <SideTab icon={<ChipIcon />} text="部件选择" />
          <SideTab icon={<WatchIcon />} text="监看1" />
        </aside>
        <svg viewBox="0 0 23 50" className="absolute bottom-[5px] right-0 h-[50px] w-[23px]" aria-hidden="true">
          <path d="M3 0h20v50L0 36V3z" fill="#676767" />
          <rect x="3" y="5" width="19" height="20" fill="#0d5f88" />
          <circle cx="12.500" cy="15" r="8" fill="#7e8a92" />
          <path d="M5.500 15l4.500-3.500v2.500h5v-2.500l4.500 3.500-4.500 3.500V16h-5v2.500z" fill="#0d4f74" />
        </svg>
      </div>
      <div className="flex h-[22px] shrink-0 items-center bg-[#2d3c5c] pl-[2px]">
        <button type="button" className="flex h-[18px] items-center gap-[2px] bg-[#3d4f76] px-[3px] text-[11px] leading-4 text-[#e5e9f0]">
          <OutputIcon />
          输出
        </button>
      </div>
      <StatusBar />
      <div className="flex h-[3px] shrink-0 gap-[2px] border-t border-[#5c81ad] bg-[#071f52]">
        <span className="ml-[115px] w-[150px] bg-[#a9b5c4]" />
        <span className="w-[150px] bg-[#dfe2e4]" />
      </div>
    </div>
  );
}
